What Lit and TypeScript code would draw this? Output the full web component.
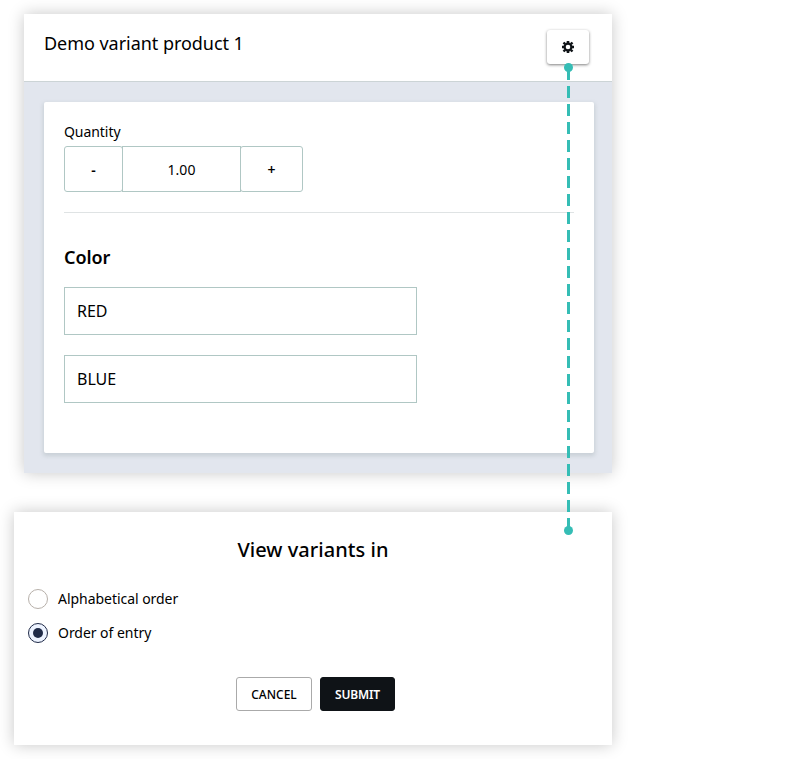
import { LitElement, html, css } from "lit";
import { customElement, state } from "lit/decorators.js";

@customElement("app-root")
export class AppRoot extends LitElement {
  @state() private order = "Order of entry";
  @state() private quantity = 1;

  private readonly variants = ["RED", "BLUE"];
  private readonly orders = ["Alphabetical order", "Order of entry"];

  static styles = css`
    :host {
      display: block;
      position: relative;
      box-sizing: border-box;
      height: 759px;
      overflow: hidden;
      padding: 14px 0 0 14px;
      background: #fff;
      color: #000;
      font: 14px/20px "Noto Sans", "Open Sans", sans-serif;
    }
    * { box-sizing: border-box; }
    button { font: inherit; color: inherit; padding: 0; margin: 0; cursor: pointer; }
    h1, h2, h3 { margin: 0; }
    .panel {
      width: 588px;
      height: 459px;
      margin-left: 10px;
      background: #e2e6ee;
      box-shadow: 0 0 15px rgba(0, 0, 0, 0.22);
    }
    .header {
      display: flex;
      justify-content: space-between;
      height: 68px;
      padding: 16px 23px 0 20px;
      background: #fff;
      border-bottom: 1px solid #ccd4d6;
    }
    .title { font-size: 18px; line-height: 26px; font-weight: 400; letter-spacing: -0.04px; }
    .settings {
      display: flex;
      align-items: center;
      justify-content: center;
      width: 42px;
      height: 34px;
      background: #fff;
      border: 0;
      border-radius: 3px;
      box-shadow: 0 1px 3px rgba(0, 0, 0, 0.5);
    }
    .card {
      width: 550px;
      height: 351px;
      margin: 20px 0 0 20px;
      padding: 20px;
      background: #fff;
      border-radius: 2px;
      box-shadow: 0 2px 4px 1px rgba(100, 120, 120, 0.2);
    }
    .label { height: 24px; letter-spacing: -0.06px; }
    .stepper { display: flex; width: 239px; height: 46px; }
    .step, .amount {
      display: flex;
      align-items: center;
      justify-content: center;
      background: #fff;
      border: 1px solid #b0c7c4;
    }
    .step { font-weight: 600; border-radius: 3px; padding-top: 2px; }
    .minus { width: 59px; }
    .amount { width: 119px; margin: 0 -1px; padding-top: 2px; z-index: 1; }
    .plus { width: 63px; }
    .rule { height: 1px; margin: 20px 0 30px; background: #dfe3e4; }
    .heading { font-size: 18px; line-height: 28px; font-weight: 600; letter-spacing: -0.1px; margin-bottom: 16px; }
    .variants { display: flex; flex-direction: column; gap: 20px; }
    .variant {
      display: flex;
      align-items: center;
      width: 353px;
      height: 48px;
      padding: 0 12px;
      font-size: 16px;
      border: 1px solid #b0c7c4;
    }
    .dialog {
      width: 598px;
      height: 233px;
      margin-top: 39px;
      padding-top: 24px;
      background: #fff;
      box-shadow: 0 0 15px rgba(0, 0, 0, 0.22);
    }
    .dialog-title { font-size: 20px; line-height: 28px; font-weight: 550; letter-spacing: 0.04px; text-align: center; }
    .options { display: flex; flex-direction: column; gap: 14px; padding: 25px 14px 0; letter-spacing: -0.04px; }
    .option { display: flex; align-items: center; gap: 10px; height: 20px; cursor: pointer; }
    .radio {
      display: flex;
      align-items: center;
      justify-content: center;
      width: 20px;
      height: 20px;
      border: 1px solid #b7b0aa;
      border-radius: 50%;
    }
    .radio.on { background: #edf3ff; border-color: #1f2a47; }
    .radio.on::after { content: ""; width: 10px; height: 10px; border-radius: 50%; background: #1f2a47; }
    .actions { display: flex; gap: 8px; padding: 34px 0 0 222px; }
    .action {
      height: 34px;
      padding-top: 2px;
      font-size: 12px;
      font-weight: 500;
      border: 1px solid #aaa;
      border-radius: 3px;
      background: #fff;
    }
    .cancel { width: 76px; }
    .submit { width: 75px; background: #0f1317; border-color: #0f1317; color: #fff; font-weight: 600; letter-spacing: -0.15px; }
    .connector { position: absolute; left: 563px; top: 62px; z-index: 2; pointer-events: none; }
  `;

  render() {
    return html`
      <section class="panel">
        <header class="header">
          <h1 class="title">Demo variant product 1</h1>
          <button class="settings" aria-label="Settings">
            <svg width="12" height="12" viewBox="0 0 12 12" fill="none" stroke="#0f1317">
              <circle cx="6" cy="6" r="3.4" stroke-width="2.2" />
              <path stroke-width="2.6" d="M6 0V2.400M6 9.600V12M0 6H2.400M9.600 6H12" />
              <path stroke-width="2.4" d="M1.500 1.500L3.200 3.200M8.800 8.800L10.500 10.500M10.500 1.500L8.800 3.200M3.200 8.800L1.500 10.500" />
            </svg>
          </button>
        </header>
        <div class="card">
          <div class="label">Quantity</div>
          <div class="stepper">
            <button class="step minus" @click=${() => (this.quantity = Math.max(0, this.quantity - 1))}>-</button>
            <div class="amount">${this.quantity.toFixed(2)}</div>
            <button class="step plus" @click=${() => (this.quantity += 1)}>+</button>
          </div>
          <div class="rule"></div>
          <h2 class="heading">Color</h2>
          <div class="variants">
            ${this.variants.map((name) => html`<div class="variant">${name}</div>`)}
          </div>
        </div>
      </section>

      <section class="dialog">
        <h3 class="dialog-title">View variants in</h3>
        <div class="options" role="radiogroup">
          ${this.orders.map(
            (name) => html`
              <div class="option" role="radio" aria-checked=${this.order === name} @click=${() => (this.order = name)}>
                <span class="radio ${this.order === name ? "on" : ""}"></span>
                <span>${name}</span>
              </div>
            `
          )}
        </div>
        <div class="actions">
          <button class="action cancel">CANCEL</button>
          <button class="action submit">SUBMIT</button>
        </div>
      </section>

      <svg class="connector" width="11" height="474" viewBox="0 0 11 474">
        <path d="M5.5 6V468" stroke="#35bdb5" stroke-width="3" stroke-dasharray="12 6" />
        <circle cx="5.5" cy="5.5" r="4.5" fill="#35bdb5" />
        <circle cx="5.5" cy="468.5" r="4.5" fill="#35bdb5" />
      </svg>
    `;
  }
}
